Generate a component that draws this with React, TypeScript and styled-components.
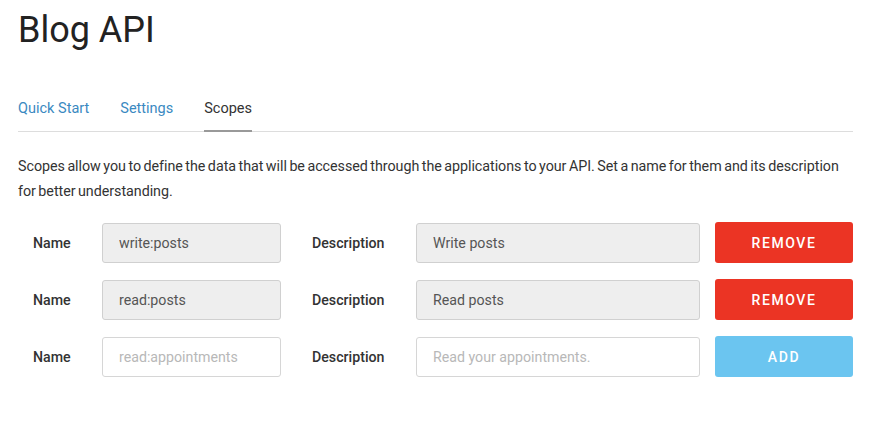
import React from "react";
import styled, { createGlobalStyle } from "styled-components";

const Global = createGlobalStyle`
  html, body { margin: 0; padding: 0; background: #fff; }
  body { font-family: Roboto, "Liberation Sans", sans-serif; color: #333; }
  * { box-sizing: border-box; }
`;

const Page = styled.div`
  width: 881px;
  padding: 0 28px 0 18px;
`;

const Title = styled.h1`
  margin: 0;
  padding-top: 8px;
  height: 52px;
  font-size: 36px;
  font-weight: 400;
  line-height: 44px;
  color: #222;
`;

const Tabs = styled.nav`
  display: flex;
  gap: 31px;
  margin-top: 40px;
  border-bottom: 1px solid #ddd;
`;

const Tab = styled.a<{ $active?: boolean }>`
  display: block;
  padding: 7px 0 11px;
  font-size: 14.5px;
  line-height: 20px;
  color: ${(p) => (p.$active ? "#333" : "#3a89c1")};
  border-bottom: 2px solid ${(p) => (p.$active ? "#999" : "transparent")};
  margin-bottom: -1px;
  text-decoration: none;
  cursor: pointer;
`;

const Intro = styled.p`
  margin: 22px 0 18px;
  font-size: 14.3px;
  line-height: 25px;
  letter-spacing: -0.04px;
  word-spacing: -1px;
  color: #333;
`;

const Rows = styled.div`
  display: flex;
  flex-direction: column;
  gap: 16px;
`;

const Row = styled.div`
  display: flex;
  align-items: center;
  height: 41px;
`;

const Label = styled.label<{ $w: number; $pad: number }>`
  flex: none;
  width: ${(p) => p.$w}px;
  padding-left: ${(p) => p.$pad}px;
  font-size: 14.2px;
  font-weight: 500;
  color: #333;
`;

const Field = styled.input<{ $w: number; $filled?: boolean }>`
  flex: none;
  width: ${(p) => p.$w}px;
  height: 40px;
  padding: 0 16px;
  border: 1px solid ${(p) => (p.$filled ? "#d0d0d0" : "#d6d6d6")};
  border-radius: 3px;
  background: ${(p) => (p.$filled ? "#eeeeee" : "#ffffff")};
  font-family: inherit;
  font-size: 14.2px;
  color: #555;
  outline: none;
  &::placeholder { color: #b8b8b8; }
`;

const Button = styled.button<{ $variant: "remove" | "add" }>`
  flex: none;
  width: 138px;
  height: 41px;
  margin-left: 15px;
  border: none;
  border-radius: 3px;
  background: ${(p) => (p.$variant === "remove" ? "#eb3424" : "#6bc5f0")};
  color: #fff;
  font-family: inherit;
  font-size: 14px;
  font-weight: 500;
  letter-spacing: 1.6px;
  text-transform: uppercase;
  cursor: pointer;
`;

const scopes = [
  { name: "write:posts", description: "Write posts" },
  { name: "read:posts", description: "Read posts" },
];

export default function App() {
  return (
    <Page>
      <Global />
      <Title>Blog API</Title>
      <Tabs>
        <Tab>Quick Start</Tab>
        <Tab>Settings</Tab>
        <Tab $active>Scopes</Tab>
      </Tabs>
      <Intro>
        Scopes allow you to define the data that will be accessed through the applications to your API. Set a name for
        them and its description for better understanding.
      </Intro>
      <Rows>
        {scopes.map((s) => (
          <Row key={s.name}>
            <Label $w={84} $pad={15}>Name</Label>
            <Field $w={179} $filled readOnly value={s.name} />
            <Label $w={135} $pad={31}>Description</Label>
            <Field $w={284} $filled readOnly value={s.description} />
            <Button $variant="remove">Remove</Button>
          </Row>
        ))}
        <Row>
          <Label $w={84} $pad={15}>Name</Label>
          <Field $w={179} placeholder="read:appointments" />
          <Label $w={135} $pad={31}>Description</Label>
          <Field $w={284} placeholder="Read your appointments." />
          <Button $variant="add">Add</Button>
        </Row>
      </Rows>
    </Page>
  );
}
